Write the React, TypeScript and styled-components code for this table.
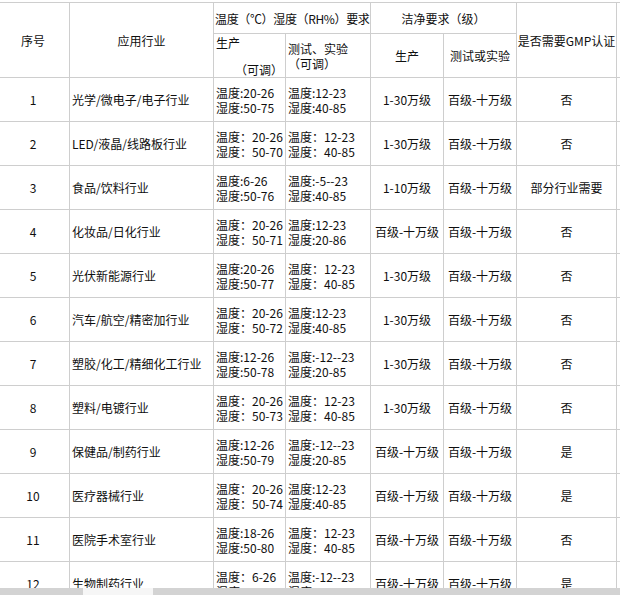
import styled, { createGlobalStyle } from 'styled-components';

type Row = {
  no: number;
  industry: string;
  prod: [string, string];
  test: [string, string];
  clean: string;
  cleanTest: string;
  gmp: string;
};

const rows: Row[] = [
  { no: 1, industry: '光学/微电子/电子行业', prod: ['温度:20-26', '湿度:50-75'], test: ['温度:12-23', '湿度:40-85'], clean: '1-30万级', cleanTest: '百级-十万级', gmp: '否' },
  { no: 2, industry: 'LED/液晶/线路板行业', prod: ['温度：20-26', '湿度：50-70'], test: ['温度：12-23', '湿度：40-85'], clean: '1-30万级', cleanTest: '百级-十万级', gmp: '否' },
  { no: 3, industry: '食品/饮料行业', prod: ['温度:6-26', '湿度:50-76'], test: ['温度:-5--23', '湿度:40-85'], clean: '1-10万级', cleanTest: '百级-十万级', gmp: '部分行业需要' },
  { no: 4, industry: '化妆品/日化行业', prod: ['温度：20-26', '湿度：50-71'], test: ['温度:12-23', '湿度:20-86'], clean: '百级-十万级', cleanTest: '百级-十万级', gmp: '否' },
  { no: 5, industry: '光伏新能源行业', prod: ['温度:20-26', '湿度:50-77'], test: ['温度：12-23', '湿度：40-85'], clean: '1-30万级', cleanTest: '百级-十万级', gmp: '否' },
  { no: 6, industry: '汽车/航空/精密加行业', prod: ['温度：20-26', '湿度：50-72'], test: ['温度:12-23', '湿度:40-85'], clean: '1-30万级', cleanTest: '百级-十万级', gmp: '否' },
  { no: 7, industry: '塑胶/化工/精细化工行业', prod: ['温度:12-26', '湿度:50-78'], test: ['温度:-12--23', '湿度:20-85'], clean: '1-30万级', cleanTest: '百级-十万级', gmp: '否' },
  { no: 8, industry: '塑料/电镀行业', prod: ['温度：20-26', '湿度：50-73'], test: ['温度：12-23', '湿度：40-85'], clean: '1-30万级', cleanTest: '百级-十万级', gmp: '否' },
  { no: 9, industry: '保健品/制药行业', prod: ['温度:12-26', '湿度:50-79'], test: ['温度:-12--23', '湿度:20-85'], clean: '百级-十万级', cleanTest: '百级-十万级', gmp: '是' },
  { no: 10, industry: '医疗器械行业', prod: ['温度：20-26', '湿度：50-74'], test: ['温度:12-23', '湿度:40-85'], clean: '百级-十万级', cleanTest: '百级-十万级', gmp: '是' },
  { no: 11, industry: '医院手术室行业', prod: ['温度:18-26', '湿度:50-80'], test: ['温度：12-23', '湿度：40-85'], clean: '百级-十万级', cleanTest: '百级-十万级', gmp: '否' },
  { no: 12, industry: '生物制药行业', prod: ['温度：6-26', '湿度：50-77'], test: ['温度:-12--23', '湿度:20-85'], clean: '百级-十万级', cleanTest: '百级-十万级', gmp: '是' },
];

const GlobalStyle = createGlobalStyle`
  body {
    margin: 0;
    background: #fff;
    overflow: hidden;
    font-family: "Noto Sans CJK SC", "DejaVu Sans", sans-serif;
    color: #0f0f0f;
  }
`;

const Sheet = styled.div`
  display: grid;
  grid-template-columns: 72px 143px 71px 84px 72px 72px 99px 1fr;
  grid-template-rows: 30px 43px repeat(12, 43px);
  gap: 1px;
  width: calc(100% + 3px);
  margin: 2px 0 0 -3px;
  padding-top: 1px;
  background: #cecece;
`;

const Cell = styled.div<{ $align?: 'left' | 'center'; $rowSpan?: number; $colSpan?: number }>`
  display: flex;
  align-items: center;
  justify-content: ${(p) => (p.$align === 'left' ? 'flex-start' : 'center')};
  padding: 0 2px;
  background: #fff;
  font-size: 12px;
  line-height: 15px;
  white-space: nowrap;
  overflow: hidden;
  grid-row: span ${(p) => p.$rowSpan ?? 1};
  grid-column: span ${(p) => p.$colSpan ?? 1};
`;

const TightCell = styled(Cell)`
  padding-left: 1px;
  letter-spacing: -0.35px;
`;

const SplitCell = styled.div`
  display: flex;
  flex-direction: column;
  justify-content: space-between;
  padding: 1px 2px 0;
  background: #fff;
  font-size: 12px;
  line-height: 15px;
`;

const Adjust = styled.span`
  align-self: flex-end;
`;

const Lines = styled.div`
  display: flex;
  flex-direction: column;
`;

const Strip = styled.div`
  position: fixed;
  left: 0;
  right: 0;
  bottom: 0;
  height: 7px;
  display: flex;
  background: #d3d3d3;
`;

const StripGap = styled.div<{ $width: number }>`
  width: ${(p) => p.$width}px;
  margin-left: 83px;
  background: #f6f6f6;
`;

const RowCells = ({ row }: { row: Row }) => (
  <>
    <Cell>{row.no}</Cell>
    <Cell $align="left">{row.industry}</Cell>
    <Cell $align="left">
      <Lines>
        <span>{row.prod[0]}</span>
        <span>{row.prod[1]}</span>
      </Lines>
    </Cell>
    <Cell $align="left">
      <Lines>
        <span>{row.test[0]}</span>
        <span>{row.test[1]}</span>
      </Lines>
    </Cell>
    <Cell>{row.clean}</Cell>
    <Cell>{row.cleanTest}</Cell>
    <Cell>{row.gmp}</Cell>
    <Cell />
  </>
);

const App = () => {
  return (
    <>
      <GlobalStyle />
      <Sheet>
        <Cell $rowSpan={2}>序号</Cell>
        <Cell $rowSpan={2}>应用行业</Cell>
        <TightCell $colSpan={2} $align="left">温度（℃）湿度（RH%）要求</TightCell>
        <Cell $colSpan={2}>洁净要求（级）</Cell>
        <Cell $rowSpan={2}>是否需要GMP认证</Cell>
        <Cell $rowSpan={2} />
        <SplitCell>
          <span>生产</span>
          <Adjust>（可调）</Adjust>
        </SplitCell>
        <Cell $align="left">
          <Lines>
            <span>测试、实验</span>
            <span>（可调）</span>
          </Lines>
        </Cell>
        <Cell>生产</Cell>
        <Cell>测试或实验</Cell>
        {rows.map((r) => (
          <RowCells key={r.no} row={r} />
        ))}
      </Sheet>
      <Strip>
        <StripGap $width={70} />
      </Strip>
    </>
  );
};

export default App;
